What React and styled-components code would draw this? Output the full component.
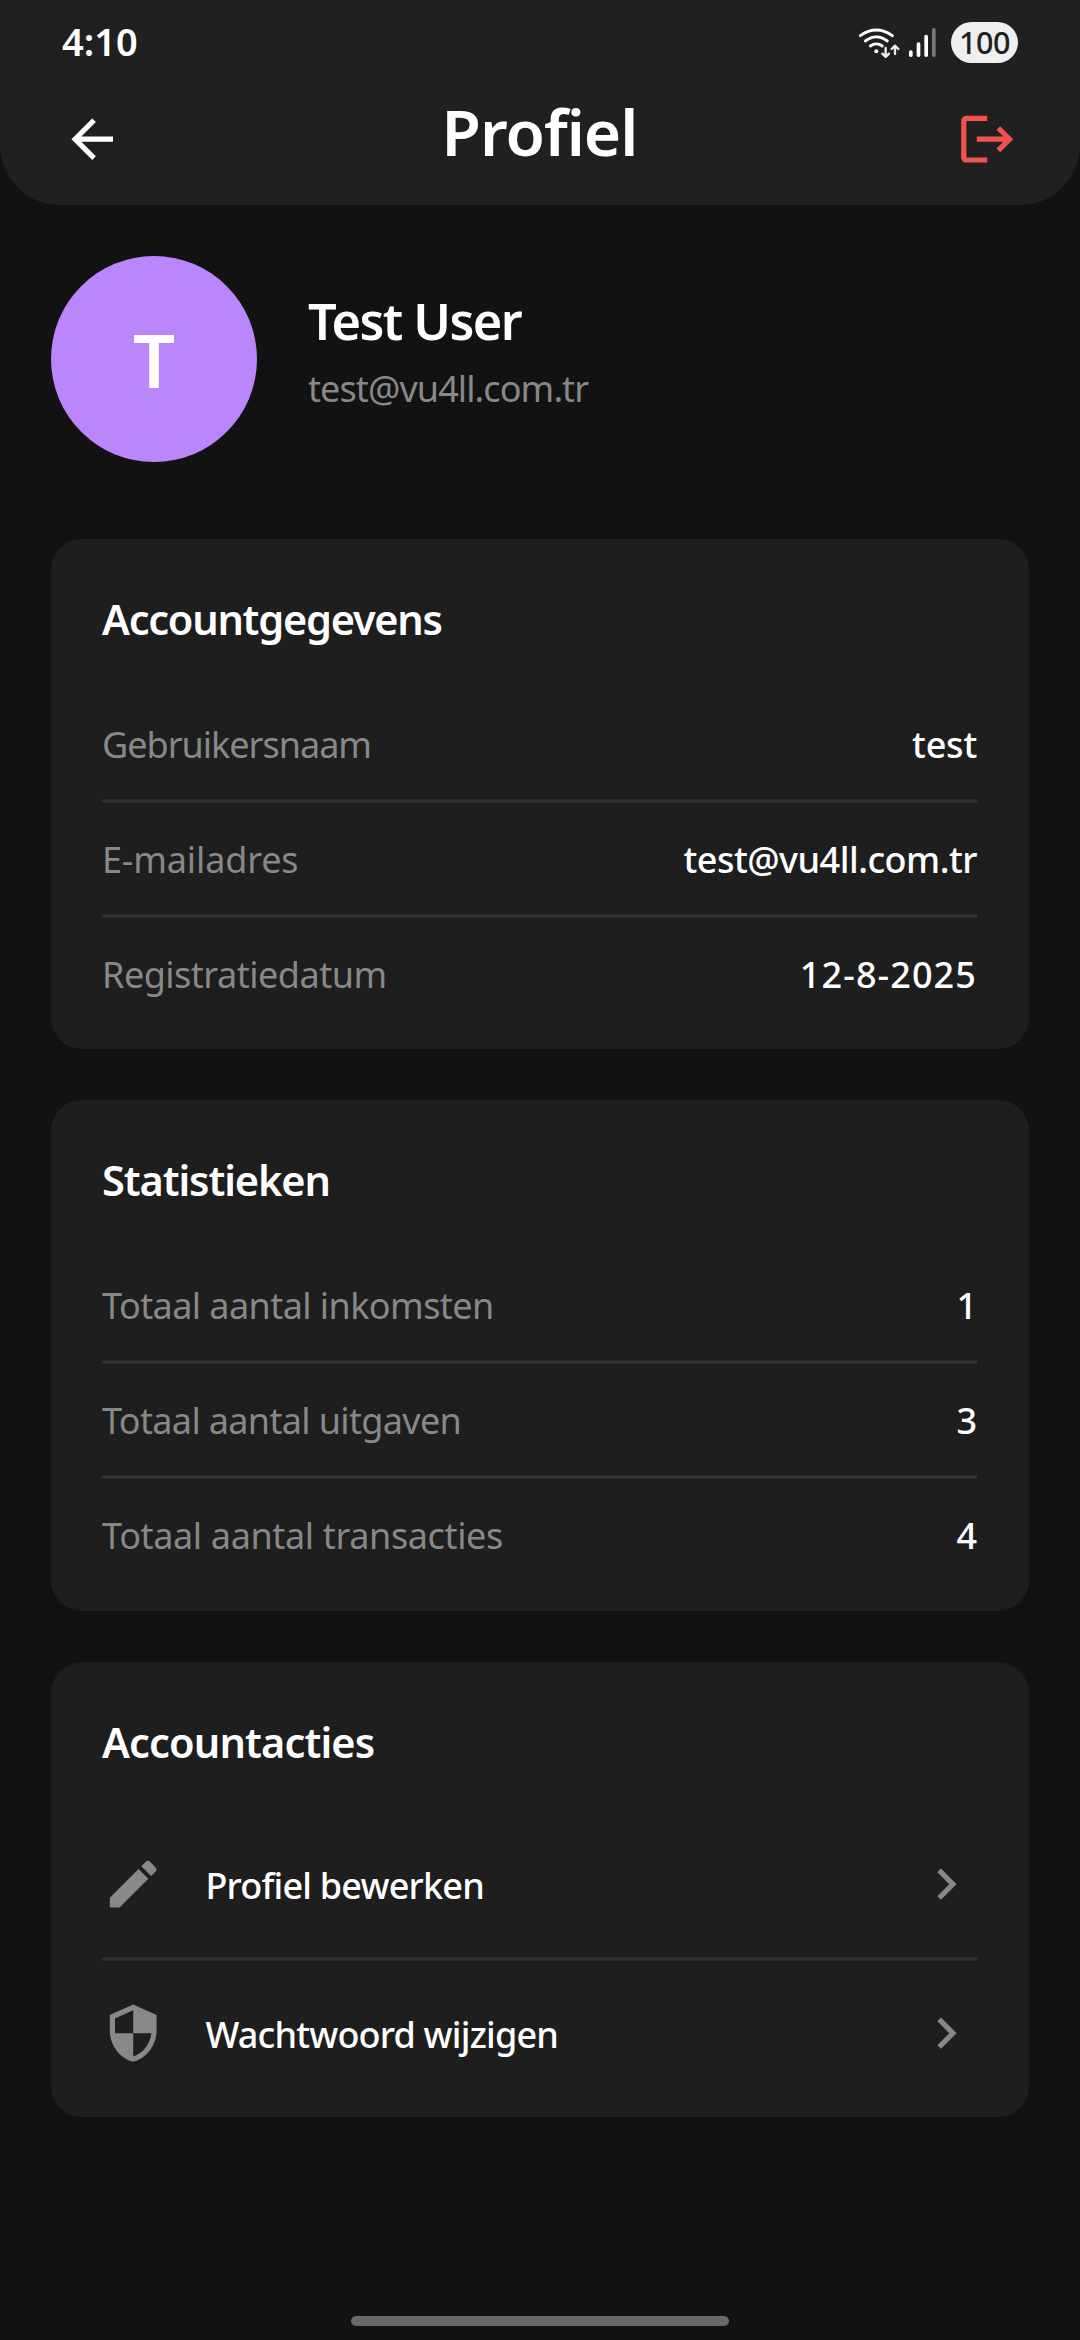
import React from "react";
import styled, { createGlobalStyle } from "styled-components";
import { MdArrowBack, MdLogout, MdEdit, MdSecurity, MdChevronRight } from "react-icons/md";

const GlobalStyle = createGlobalStyle`
  * { box-sizing: border-box; }
  body {
    margin: 0;
    background: #121212;
    color: #fff;
    font-family: "Noto Sans", sans-serif;
    font-variant-ligatures: none;
  }
`;

const Screen = styled.div`
  display: flex;
  flex-direction: column;
  width: 1080px;
  height: 2340px;
  overflow: hidden;
  background: #121212;
`;

const Header = styled.header`
  height: 205px;
  background: #202020;
  border-radius: 0 0 60px 60px;
`;

const StatusBar = styled.div`
  display: flex;
  align-items: center;
  justify-content: space-between;
  height: 85px;
  padding: 0 62px;
`;

const Clock = styled.span`
  font-size: 38px;
  font-weight: 600;
  line-height: 50px;
  padding-bottom: 4px;
`;

const StatusIcons = styled.div`
  display: flex;
  align-items: center;

  svg { display: block; }
  svg + svg { margin-left: 7px; }
`;

const Battery = styled.span`
  display: flex;
  align-items: center;
  justify-content: center;
  width: 67px;
  height: 41px;
  margin-left: 14px;
  padding-bottom: 2px;
  border-radius: 21px;
  background: #efefef;
  color: #202020;
  font-size: 30.5px;
  font-weight: 500;
  line-height: 36px;
  letter-spacing: -0.4px;
`;

const TitleBar = styled.div`
  display: flex;
  align-items: center;
  justify-content: space-between;
  height: 108px;
  padding: 0 62px 0 61px;
`;

const IconButton = styled.button`
  display: flex;
  padding: 0;
  border: 0;
  background: none;
  color: ${(p) => p.$color};
  font-size: 62.4px;
`;

const Title = styled.h1`
  margin: 0;
  padding-bottom: 15px;
  font-size: 64px;
  font-weight: 600;
  line-height: 80px;
  letter-spacing: -1px;
`;

const Content = styled.main`
  display: flex;
  flex-direction: column;
  padding: 51px 51px 0;
`;

const Profile = styled.section`
  display: flex;
  gap: 51px;
  height: 206px;
  margin-bottom: 77px;
`;

const Avatar = styled.div`
  display: flex;
  align-items: center;
  justify-content: center;
  width: 206px;
  height: 206px;
  padding-top: 2px;
  border-radius: 50%;
  background: #bb86fc;
  font-size: 74px;
  font-weight: 600;
  line-height: 100px;
`;

const Identity = styled.div`
  display: flex;
  flex-direction: column;
  gap: 8px;
  padding-top: 30px;
`;

const Name = styled.h2`
  margin: 0;
  font-size: 50.5px;
  font-weight: 600;
  line-height: 70px;
  letter-spacing: -1.6px;
`;

const Email = styled.span`
  color: #888;
  font-size: 36px;
  line-height: 50px;
  letter-spacing: -0.9px;
`;

const Card = styled.section`
  display: flex;
  flex-direction: column;
  height: ${(p) => p.$height}px;
  margin-bottom: 51px;
  padding: 51px 51px 0;
  border-radius: 31px;
  background: #1e1e1e;
`;

const CardTitle = styled.h3`
  margin: 0 0 40px;
  font-size: 41.5px;
  font-weight: 600;
  line-height: 58px;
  letter-spacing: ${(p) => p.$tracking}px;
`;

const InfoRow = styled.div`
  display: flex;
  align-items: center;
  justify-content: space-between;
  height: 111px;
  padding: 2px 1px 0 0;
`;

const Divider = styled.div`
  flex: none;
  height: 4px;
  margin-right: 1px;
  background: linear-gradient(#292929 1px, #333 1px 3px, #292929 3px);
`;

const Label = styled.span`
  color: #888;
  font-size: 36px;
  line-height: 50px;
  letter-spacing: ${(p) => p.$tracking}px;
`;

const Value = styled.span`
  font-size: 36px;
  font-weight: 500;
  line-height: 50px;
  letter-spacing: ${(p) => p.$tracking}px;
`;

const ActionRow = styled.div`
  display: flex;
  align-items: center;
  height: ${(p) => p.$height}px;
  padding-right: 1px;
  color: #888;
  font-size: 62.4px;
`;

const ActionLabel = styled.span`
  flex: 1;
  padding-top: 3px;
  margin-left: 41px;
  color: #fff;
  font-size: 36px;
  font-weight: 500;
  line-height: 50px;
  letter-spacing: -0.8px;
`;

const HomeIndicator = styled.div`
  width: 378px;
  height: 10px;
  margin: auto auto 14px;
  border-radius: 5px;
  background: #686868;
`;

const WifiIcon = () => (
  <svg width="44" height="34" viewBox="21 30 132 102" fill="none" strokeLinecap="round" strokeLinejoin="round">
    <g stroke="#fff" strokeWidth="8.5">
      <path d="M31 59Q79 25 127 59" />
      <path d="M46 75Q79 50 112 75" />
      <path d="M61 90Q79 77 97 90" />
    </g>
    <circle cx="79" cy="106" r="6" fill="#fff" />
    <g stroke="#202020" strokeWidth="11">
      <path d="M107 98V121M97 113l10 10 10-10" />
      <path d="M135 114V91M125 99l10-10 10 10" />
    </g>
    <g stroke="#eee" strokeWidth="7">
      <path d="M107 96V121M97 113l10 10 10-10" />
      <path d="M135 114V91M125 99l10-10 10 10" />
    </g>
  </svg>
);

const SignalIcon = () => (
  <svg width="29" height="33" viewBox="174 33 87 99" fill="#fff">
    <rect x="177" y="106" width="11" height="20" rx="5" />
    <rect x="200" y="82" width="11" height="44" rx="5" />
    <rect x="223" y="59" width="11" height="67" rx="5" />
    <rect x="246" y="39" width="11" height="87" rx="5" fill="#777" />
  </svg>
);

const accountRows = [
  { label: "Gebruikersnaam", value: "test", tracking: -1, valueTracking: -0.2 },
  { label: "E-mailadres", value: "test@vu4ll.com.tr", tracking: -0.15, valueTracking: -0.5 },
  { label: "Registratiedatum", value: "12-8-2025", tracking: -0.5, valueTracking: 1.1 },
];

const statRows = [
  { label: "Totaal aantal inkomsten", value: "1", tracking: -0.57 },
  { label: "Totaal aantal uitgaven", value: "3", tracking: -0.65 },
  { label: "Totaal aantal transacties", value: "4", tracking: -0.36 },
];

const InfoCard = ({ title, titleTracking, height, rows }) => (
  <Card $height={height}>
    <CardTitle $tracking={titleTracking}>{title}</CardTitle>
    {rows.map((row, i) => (
      <React.Fragment key={row.label}>
        {i > 0 && <Divider />}
        <InfoRow>
          <Label $tracking={row.tracking}>{row.label}</Label>
          <Value $tracking={row.valueTracking || 0}>{row.value}</Value>
        </InfoRow>
      </React.Fragment>
    ))}
  </Card>
);

export default function App() {
  return (
    <>
      <GlobalStyle />
      <Screen>
        <Header>
          <StatusBar>
            <Clock>4:10</Clock>
            <StatusIcons>
              <WifiIcon />
              <SignalIcon />
              <Battery>100</Battery>
            </StatusIcons>
          </StatusBar>
          <TitleBar>
            <IconButton $color="#fff"><MdArrowBack /></IconButton>
            <Title>Profiel</Title>
            <IconButton $color="#ef5350"><MdLogout /></IconButton>
          </TitleBar>
        </Header>
        <Content>
          <Profile>
            <Avatar>T</Avatar>
            <Identity>
              <Name>Test User</Name>
              <Email>test@vu4ll.com.tr</Email>
            </Identity>
          </Profile>
          <InfoCard title="Accountgegevens" titleTracking={-1.25} height={510} rows={accountRows} />
          <InfoCard title="Statistieken" titleTracking={-1.1} height={511} rows={statRows} />
          <Card $height={455}>
            <CardTitle $tracking={-0.85}>Accountacties</CardTitle>
            <ActionRow $height={146}>
              <MdEdit />
              <ActionLabel>Profiel bewerken</ActionLabel>
              <MdChevronRight />
            </ActionRow>
            <Divider />
            <ActionRow $height={144}>
              <MdSecurity />
              <ActionLabel>Wachtwoord wijzigen</ActionLabel>
              <MdChevronRight />
            </ActionRow>
          </Card>
        </Content>
        <HomeIndicator />
      </Screen>
    </>
  );
}
